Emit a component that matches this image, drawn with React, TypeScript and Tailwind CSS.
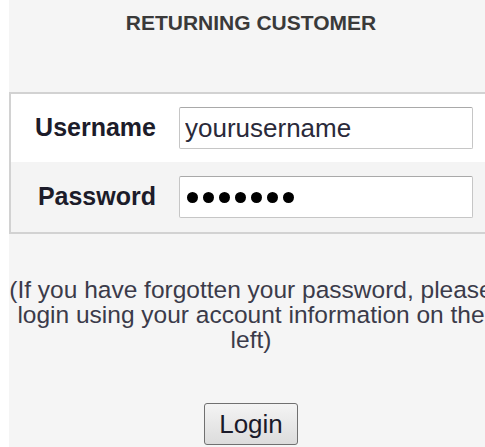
import { useState } from "react";

const PASSWORD_LENGTH = 7;

export default function App() {
  const [username, setUsername] = useState("yourusername");

  return (
    <div className="w-[485px] h-[447px] overflow-hidden bg-white font-['Liberation_Sans',Arial,sans-serif] text-[#333]">
      <div className="ml-[9px] w-[484px] min-h-[447px] bg-[#f5f5f5] pt-[11px] flex flex-col items-center">
        <h2 className="text-[21px] leading-[24px] font-bold text-[#3a3a3a]">RETURNING CUSTOMER</h2>

        {/* Login table */}
        <div className="self-stretch mt-[57px] border-2 border-[#d2d2d2] border-r-0">
          <div className="flex items-center h-[68px] bg-white">
            <label className="w-[145px] text-right text-[25px] font-bold text-[#1c1c2a]">Username</label>
            <input
              value={username}
              onChange={(e) => setUsername(e.target.value)}
              className="ml-[23px] w-[294px] h-[42px] px-[5px] bg-white border border-[#c6c6c6] border-t-[#a9a9a9] rounded-[2px] text-[26px] text-[#2a2a3a] outline-none"
            />
          </div>
          <div className="flex items-center h-[70px] bg-[#f4f4f4]">
            <label className="w-[145px] text-right text-[25px] font-bold text-[#1c1c2a]">Password</label>
            <div className="ml-[23px] w-[294px] h-[42px] px-[7px] bg-white border border-[#c6c6c6] border-t-[#a9a9a9] rounded-[2px] flex items-center gap-[5px]">
              {Array.from({ length: PASSWORD_LENGTH }).map((_, i) => (
                <span key={i} className="w-[11px] h-[11px] rounded-full bg-black" />
              ))}
            </div>
          </div>
        </div>

        <p className="mt-[43px] text-[24.5px] leading-[25px] text-center whitespace-nowrap text-[#3b3b4a]">
          (If you have forgotten your password, please
          <br />
          login using your account information on the
          <br />
          left)
        </p>

        <button className="mt-[51px] w-[94px] h-[42px] rounded-[3px] border border-[#707070] bg-gradient-to-b from-[#f4f4f4] to-[#dcdcdc] text-[26px] text-[#1a1a2a] leading-none">
          Login
        </button>
      </div>
    </div>
  );
}
